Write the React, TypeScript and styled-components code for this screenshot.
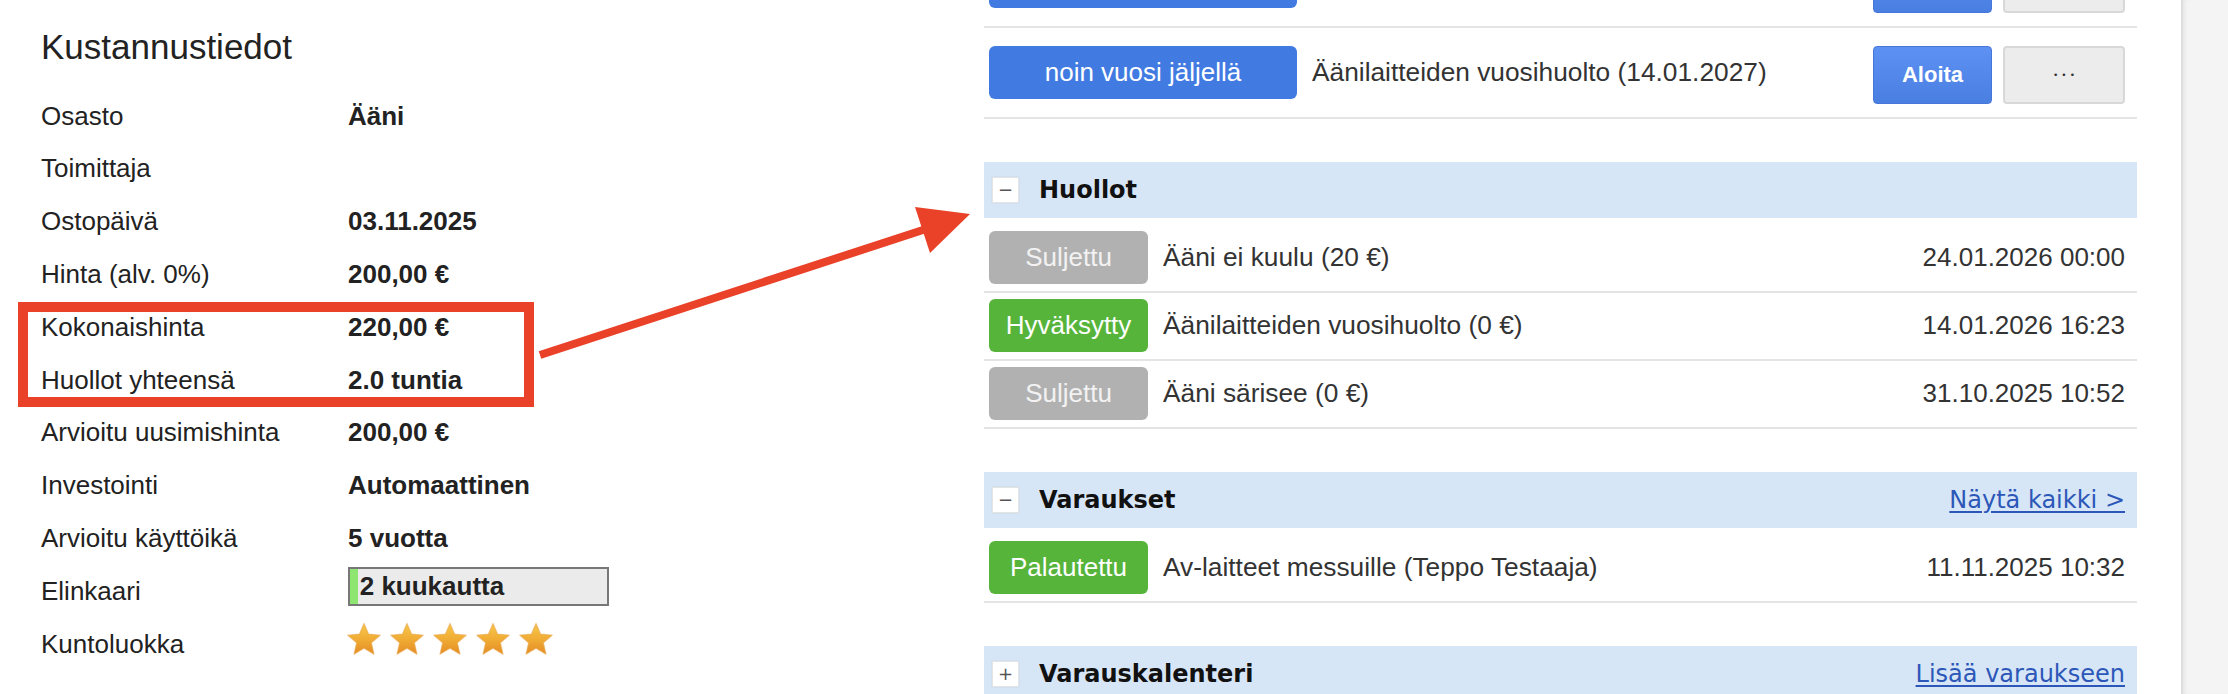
import React from "react";
import styled, { createGlobalStyle } from "styled-components";

const GlobalStyle = createGlobalStyle`
  html, body { margin: 0; padding: 0; background: #fff; }
  body {
    font-family: "Liberation Sans", Arial, Helvetica, sans-serif;
    color: #222;
  }
  #root { width: 2228px; height: 694px; overflow: hidden; }
`;

const Page = styled.div`
  position: relative;
  display: flex;
  width: 2228px;
  height: 694px;
  overflow: hidden;
  background: #fff;
`;

/* ---------- left: cost info ---------- */
const LeftPanel = styled.section`
  width: 984px;
  flex: none;
  box-sizing: border-box;
  padding: 27px 0 0 41px;
`;

const Title = styled.h2`
  margin: 0;
  font-size: 35px;
  font-weight: 400;
  line-height: 40px;
  color: #222;
`;

const InfoTable = styled.div`
  margin-top: 22.6px;
  display: grid;
  grid-template-columns: 307px 400px;
  grid-auto-rows: 52.8px;
  align-items: start;
`;

const Label = styled.div`
  font-size: 26px;
  line-height: 52.8px;
  color: #222;
  white-space: nowrap;
`;

const Value = styled.div`
  font-size: 26px;
  font-weight: 700;
  line-height: 52.8px;
  color: #222;
  white-space: nowrap;
`;

const LifeBar = styled.div`
  margin-top: 2.2px;
  width: 261px;
  height: 39px;
  box-sizing: border-box;
  border: 2px solid #777;
  background: #ebebeb;
  display: flex;
  align-items: center;
`;

const LifeFill = styled.div`
  align-self: stretch;
  background: #8ee56f;
  flex: none;
`;

const LifeText = styled.span`
  margin-left: 2px;
  font-size: 26px;
  font-weight: 700;
  color: #222;
  white-space: nowrap;
`;

const Stars = styled.div`
  padding-top: 4px;
  margin-left: -1px;
  display: flex;
  gap: 9px;
`;

const StarIcon = ({ i }: { i: number }) => (
  <svg width="34" height="34" viewBox="0 0 24 24">
    <defs>
      <linearGradient id={`starg${i}`} x1="0" y1="0" x2="0" y2="1">
        <stop offset="0" stopColor="#f7c84a" />
        <stop offset="0.5" stopColor="#f0ad35" />
        <stop offset="1" stopColor="#e48c24" />
      </linearGradient>
    </defs>
    <path
      d="M12 1 L15.23 8.55 L23.41 9.29 L17.23 14.7 L19.05 22.71 L12 18.5 L4.95 22.71 L6.77 14.7 L0.59 9.29 L8.77 8.55 Z"
      fill={`url(#starg${i})`}
      stroke="#eaa64a"
      strokeOpacity="0.55"
      strokeWidth="0.9"
      strokeLinejoin="round"
    />
  </svg>
);

/* ---------- right: maintenance lists ---------- */
const RightPanel = styled.section`
  width: 1153px;
  flex: none;
  margin-top: -63px;
`;

const ActionRow = styled.div`
  display: flex;
  align-items: flex-start;
  padding: 18px 12px 13px 5px;
  border-bottom: 2px solid #e4e4e4;
`;

const StatusBadge = styled.div<{ $bg: string; $fg: string; $w: number }>`
  flex: none;
  width: ${(p) => p.$w}px;
  height: 53px;
  border-radius: 6px;
  background: ${(p) => p.$bg};
  color: ${(p) => p.$fg};
  font-size: 26px;
  line-height: 53px;
  text-align: center;
  white-space: nowrap;
`;

const Desc = styled.div`
  flex: 1;
  margin-left: 15px;
  font-size: 26.3px;
  line-height: 53px;
  color: #333;
  white-space: nowrap;
`;

const Actions = styled.div`
  display: flex;
  gap: 11px;
  flex: none;
`;

const StartButton = styled.button`
  width: 119px;
  height: 58px;
  box-sizing: border-box;
  border: 1px solid #4677d8;
  border-radius: 4px;
  background: linear-gradient(#5d91f2, #4a7fe2);
  color: #fff;
  font-family: "Liberation Sans", Arial, sans-serif;
  font-size: 22px;
  font-weight: 700;
  padding: 0;
`;

const MoreButton = styled.button`
  width: 122px;
  height: 58px;
  box-sizing: border-box;
  border: 2px solid #d8d8d8;
  border-radius: 4px;
  background: #ececec;
  color: #333;
  font-family: "DejaVu Sans", sans-serif;
  font-size: 9px;
  letter-spacing: 3px;
  padding: 0 0 0 3px;
`;

const Section = styled.div`
  margin-top: 43px;
`;

const SectionHeader = styled.div`
  height: 56px;
  background: #d7e6f6;
  display: flex;
  align-items: center;
  padding: 0 12px 0 8px;
`;

const Toggle = styled.span`
  width: 27px;
  height: 26px;
  box-sizing: border-box;
  background: #fff;
  border: 1px solid #e4e4e4;
  box-shadow: 0 0 1px rgba(0, 0, 0, 0.15);
  display: flex;
  align-items: center;
  justify-content: center;
  font-family: "DejaVu Sans", sans-serif;
  font-size: 18px;
  color: #555;
  line-height: 1;
`;

const SectionTitle = styled.span`
  margin-left: 20px;
  font-family: "DejaVu Sans", Verdana, sans-serif;
  font-size: 24px;
  font-weight: 700;
  color: #111;
`;

const HeaderLink = styled.a`
  margin-left: auto;
  font-family: "DejaVu Sans", Verdana, sans-serif;
  font-size: 24px;
  color: #2c57b8;
  text-decoration: underline;
  text-underline-offset: 3px;
  text-decoration-thickness: 2px;
  cursor: pointer;
`;

const ItemList = styled.div`
  padding-top: 7px;
`;

const ItemRow = styled.div`
  display: flex;
  align-items: center;
  padding: 6px 12px 7px 5px;
  border-bottom: 2px solid #e4e4e4;
`;

const When = styled.div`
  flex: none;
  font-size: 26px;
  color: #333;
  white-space: nowrap;
`;

const Gutter = styled.aside`
  margin-left: 44px;
  flex: 1;
  background: #f4f4f4;
  border-left: 2px solid #dedede;
  box-shadow: inset 4px 0 4px -2px rgba(0, 0, 0, 0.06);
`;

/* ---------- annotation overlay ---------- */
const HighlightBox = styled.div`
  position: absolute;
  left: 18px;
  top: 302px;
  width: 516px;
  height: 105px;
  box-sizing: border-box;
  border: 10px solid #ea4129;
  pointer-events: none;
`;

const ArrowSvg = styled.svg`
  position: absolute;
  left: 530px;
  top: 195px;
  pointer-events: none;
`;

const GREY = { bg: "#b1b1b1", fg: "#f2f2f2" };
const GREEN = { bg: "#56b43a", fg: "#ffffff" };
const BLUE = { bg: "#417be2", fg: "#ffffff" };

const huollot = [
  { s: "Suljettu", c: GREY, d: "Ääni ei kuulu (20 €)", t: "24.01.2026 00:00" },
  { s: "Hyväksytty", c: GREEN, d: "Äänilaitteiden vuosihuolto (0 €)", t: "14.01.2026 16:23" },
  { s: "Suljettu", c: GREY, d: "Ääni särisee (0 €)", t: "31.10.2025 10:52" },
];

const info: [string, string][] = [
  ["Osasto", "Ääni"],
  ["Toimittaja", ""],
  ["Ostopäivä", "03.11.2025"],
  ["Hinta (alv. 0%)", "200,00 €"],
  ["Kokonaishinta", "220,00 €"],
  ["Huollot yhteensä", "2.0 tuntia"],
  ["Arvioitu uusimishinta", "200,00 €"],
  ["Investointi", "Automaattinen"],
  ["Arvioitu käyttöikä", "5 vuotta"],
];

export default function App() {
  const lifePct = 3;
  return (
    <>
      <GlobalStyle />
      <Page>
        <LeftPanel>
          <Title>Kustannustiedot</Title>
          <InfoTable>
            {info.map(([l, v]) => (
              <React.Fragment key={l}>
                <Label>{l}</Label>
                <Value>{v}</Value>
              </React.Fragment>
            ))}
            <Label>Elinkaari</Label>
            <div>
              <LifeBar>
                <LifeFill style={{ width: `${lifePct}%` }} />
                <LifeText>2 kuukautta</LifeText>
              </LifeBar>
            </div>
            <Label>Kuntoluokka</Label>
            <Stars>
              {[0, 1, 2, 3, 4].map((i) => (
                <StarIcon key={i} i={i} />
              ))}
            </Stars>
          </InfoTable>
        </LeftPanel>

        <RightPanel>
          {/* row scrolled mostly out of view: only the bottoms of its controls show */}
          <ActionRow>
            <StatusBadge $bg={BLUE.bg} $fg={BLUE.fg} $w={308} />
            <Desc />
            <Actions>
              <StartButton aria-label="Aloita" />
              <MoreButton aria-label="Lisää" />
            </Actions>
          </ActionRow>
          <ActionRow>
            <StatusBadge $bg={BLUE.bg} $fg={BLUE.fg} $w={308}>
              noin vuosi jäljellä
            </StatusBadge>
            <Desc>Äänilaitteiden vuosihuolto (14.01.2027)</Desc>
            <Actions>
              <StartButton>Aloita</StartButton>
              <MoreButton>•••</MoreButton>
            </Actions>
          </ActionRow>

          <Section>
            <SectionHeader>
              <Toggle>−</Toggle>
              <SectionTitle>Huollot</SectionTitle>
            </SectionHeader>
            <ItemList>
              {huollot.map((h, i) => (
                <ItemRow key={i}>
                  <StatusBadge $bg={h.c.bg} $fg={h.c.fg} $w={159}>
                    {h.s}
                  </StatusBadge>
                  <Desc>{h.d}</Desc>
                  <When>{h.t}</When>
                </ItemRow>
              ))}
            </ItemList>
          </Section>

          <Section>
            <SectionHeader>
              <Toggle>−</Toggle>
              <SectionTitle>Varaukset</SectionTitle>
              <HeaderLink>Näytä kaikki &gt;</HeaderLink>
            </SectionHeader>
            <ItemList>
              <ItemRow>
                <StatusBadge $bg={GREEN.bg} $fg={GREEN.fg} $w={159}>
                  Palautettu
                </StatusBadge>
                <Desc>Av-laitteet messuille (Teppo Testaaja)</Desc>
                <When>11.11.2025 10:32</When>
              </ItemRow>
            </ItemList>
          </Section>

          <Section>
            <SectionHeader>
              <Toggle>+</Toggle>
              <SectionTitle>Varauskalenteri</SectionTitle>
              <HeaderLink>Lisää varaukseen</HeaderLink>
            </SectionHeader>
          </Section>
        </RightPanel>

        <Gutter />

        <HighlightBox />
        <ArrowSvg width="450" height="170" viewBox="0 0 450 170">
          <line x1="10" y1="160" x2="396" y2="34" stroke="#ea4129" strokeWidth="8" />
          <polygon points="385,12 400,58 440,19" fill="#ea4129" />
        </ArrowSvg>
      </Page>
    </>
  );
}
